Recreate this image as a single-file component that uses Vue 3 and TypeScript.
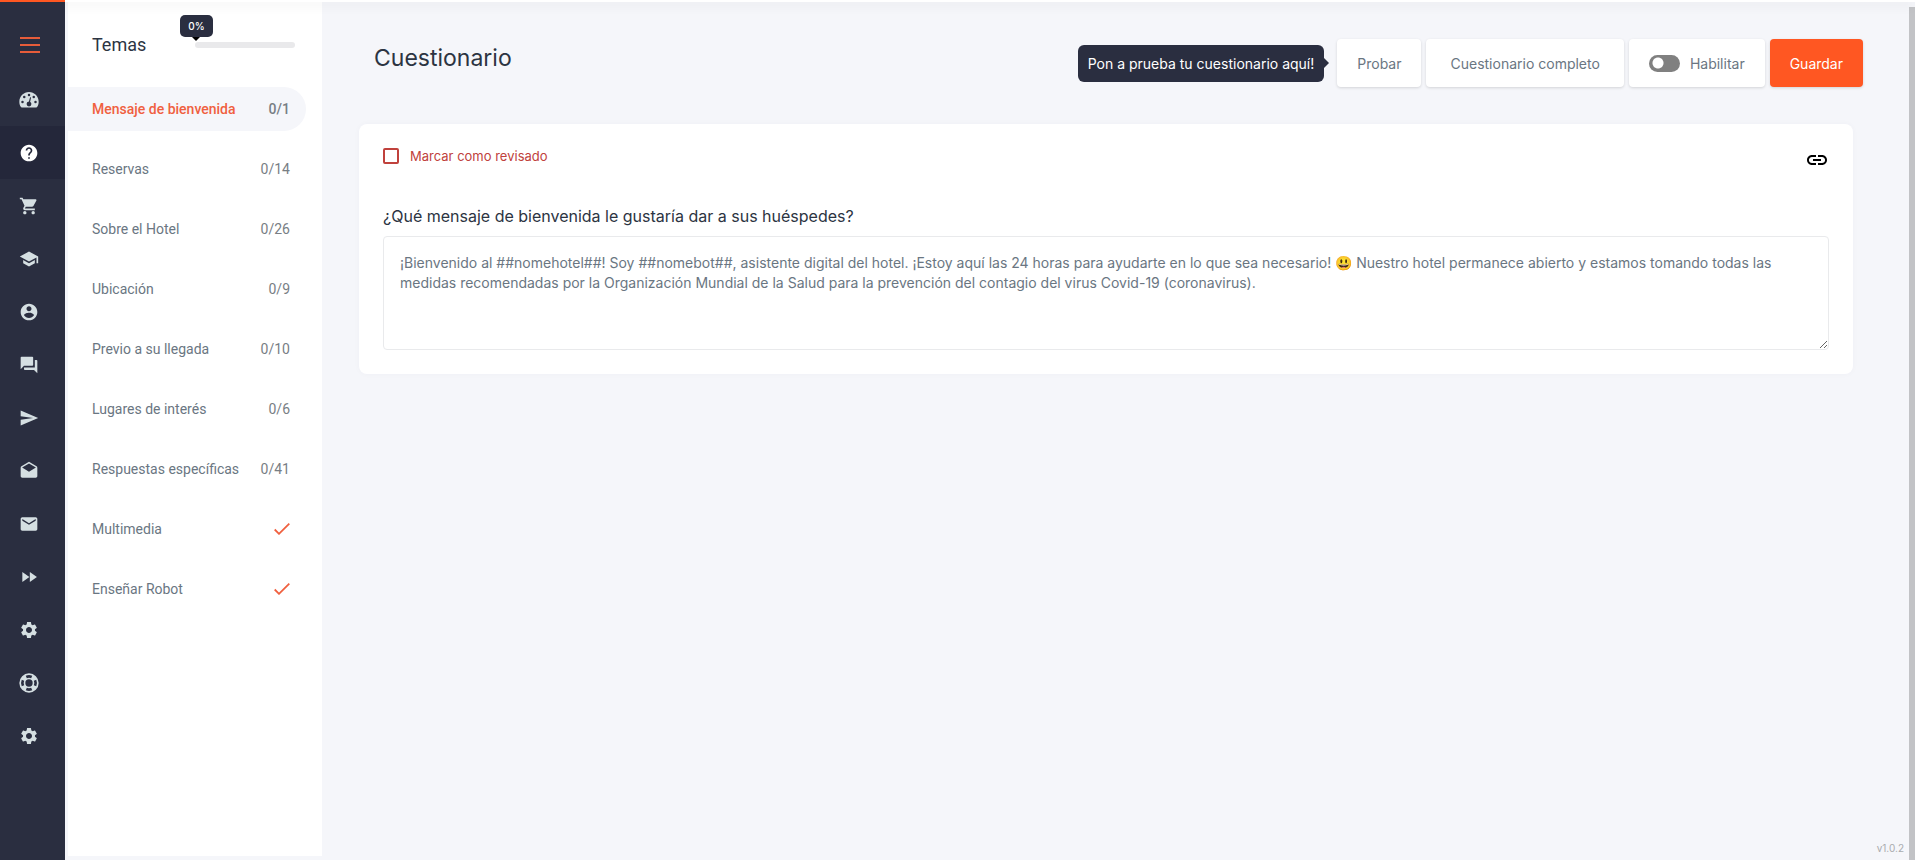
<script setup lang="ts">
import { ref } from 'vue'

interface NavItem {
  name: string
  paths: string
  active?: boolean
}

interface Topic {
  name: string
  count?: string
  active?: boolean
}

const gear =
  'M19.14 12.94c.04-.3.06-.61.06-.94 0-.32-.02-.64-.07-.94l2.03-1.58c.18-.14.23-.41.12-.61l-1.92-3.32c-.12-.22-.37-.29-.59-.22l-2.39.96c-.5-.38-1.03-.7-1.62-.94l-.36-2.54c-.04-.24-.24-.41-.48-.41h-3.84c-.24 0-.43.17-.47.41l-.36 2.54c-.59.24-1.13.57-1.62.94l-2.39-.96c-.22-.08-.47 0-.59.22L2.74 8.87c-.12.21-.08.47.12.61l2.03 1.58c-.05.3-.09.63-.09.94s.02.64.07.94l-2.03 1.58c-.18.14-.23.41-.12.61l1.92 3.32c.12.22.37.29.59.22l2.39-.96c.5.38 1.03.7 1.62.94l.36 2.54c.05.24.24.41.48.41h3.84c.24 0 .44-.17.47-.41l.36-2.54c.59-.24 1.13-.56 1.62-.94l2.39.96c.22.08.47 0 .59-.22l1.92-3.32c.12-.22.07-.47-.12-.61l-2.01-1.58zM12 15.6c-1.98 0-3.6-1.62-3.6-3.6s1.62-3.6 3.6-3.6 3.6 1.62 3.6 3.6-1.62 3.6-3.6 3.6z'

const nav: NavItem[] = [
  {
    name: 'Panel',
    paths:
      'M12 2.4C5.600 2.400.4 7.600.4 14c0 2.300.6 4.400 1.700 6.200.3.500.7.800 1.300.8h17.200c.6 0 1-.3 1.300-.8 1.100-1.800 1.700-3.900 1.700-6.200C23.600 7.600 18.400 2.400 12 2.400zM12 4.600a1.500 1.500 0 1 1 0 3 1.500 1.500 0 0 1 0-3zM6.300 7a1.500 1.500 0 1 1 0 3 1.500 1.500 0 0 1 0-3zM17.700 7a1.500 1.500 0 1 1 0 3 1.500 1.500 0 0 1 0-3zM4.200 12.800a1.500 1.500 0 1 1 0 3 1.500 1.500 0 0 1 0-3zM19.800 12.800a1.500 1.500 0 1 1 0 3 1.500 1.500 0 0 1 0-3zM13.300 8.700l1.200.3-1.200 5.300c1 .5 1.600 1.400 1.600 2.500a2.900 2.900 0 1 1-3-2.900z'
  },
  {
    name: 'Cuestionario',
    active: true,
    paths:
      'M12 2C6.480 2 2 6.480 2 12s4.480 10 10 10 10-4.480 10-10S17.520 2 12 2zm1 17h-2v-2h2v2zm2.070-7.750l-.9.920C13.450 12.900 13 13.500 13 15h-2v-.5c0-1.100.45-2.100 1.170-2.830l1.240-1.260c.37-.36.59-.86.59-1.410 0-1.100-.9-2-2-2s-2 .9-2 2H8c0-2.210 1.790-4 4-4s4 1.790 4 4c0 .88-.36 1.680-.93 2.250z'
  },
  {
    name: 'Tienda',
    paths:
      'M7 18c-1.100 0-1.990.9-1.990 2S5.900 22 7 22s2-.9 2-2-.9-2-2-2zM1 2v2h2l3.600 7.590-1.350 2.450c-.16.28-.25.61-.25.960 0 1.100.9 2 2 2h12v-2H7.420c-.14 0-.25-.11-.25-.25l.03-.12.900-1.630h7.450c.75 0 1.410-.41 1.750-1.030l3.580-6.490c.08-.14.12-.31.12-.48 0-.55-.45-1-1-1H5.210l-.94-2H1zm16 16c-1.100 0-1.990.9-1.990 2s.89 2 1.990 2 2-.9 2-2-.9-2-2-2z'
  },
  {
    name: 'Formación',
    paths: 'M5 13.180v4L12 21l7-3.820v-4L12 17l-7-3.820zM12 3L1 9l11 6 9-4.910V17h2V9L12 3z'
  },
  {
    name: 'Cuenta',
    paths:
      'M12 2C6.480 2 2 6.480 2 12s4.480 10 10 10 10-4.480 10-10S17.520 2 12 2zm0 3c1.660 0 3 1.340 3 3s-1.340 3-3 3-3-1.340-3-3 1.340-3 3-3zm0 14.200c-2.500 0-4.710-1.280-6-3.220.03-1.990 4-3.080 6-3.080 1.990 0 5.970 1.090 6 3.080-1.290 1.940-3.500 3.220-6 3.220z'
  },
  {
    name: 'Conversaciones',
    paths:
      'M21 6h-2v9H6v2c0 .55.45 1 1 1h11l4 4V7c0-.55-.45-1-1-1zm-4 6V3c0-.55-.45-1-1-1H3c-.55 0-1 .45-1 1v14l4-4h10c.55 0 1-.45 1-1z'
  },
  { name: 'Enviar', paths: 'M2.010 21L23 12 2.010 3 2 10l15 2-15 2z' },
  {
    name: 'Mensajes leídos',
    paths:
      'M21.990 8c0-.72-.37-1.350-.94-1.700L12 1 2.950 6.300C2.380 6.650 2 7.280 2 8v10c0 1.100.9 2 2 2h16c1.100 0 2-.9 2-2l-.01-10zM12 13L3.740 7.840 12 3l8.260 4.840L12 13z'
  },
  {
    name: 'Correo',
    paths:
      'M20 4H4c-1.100 0-1.990.9-1.990 2L2 18c0 1.100.9 2 2 2h16c1.100 0 2-.9 2-2V6c0-1.100-.9-2-2-2zm0 4l-8 5-8-5V6l8 5 8-5v2z'
  },
  { name: 'Avanzar', paths: 'M4 18l8.500-6L4 6v12zm9-12v12l8.500-6L13 6z' },
  { name: 'Ajustes', paths: gear },
  {
    name: 'Ayuda',
    paths:
      'M12 .4a11.600 11.600 0 1 0 0 23.200 11.600 11.600 0 0 0 0-23.200zM12 7.600a4.400 4.400 0 1 1 0 8.800 4.400 4.400 0 0 1 0-8.800zM8.100 3.300a9.500 9.500 0 0 1 7.800 0l-1.300 2.900a6.400 6.400 0 0 0-5.200 0zM20.700 8.100a9.500 9.500 0 0 1 0 7.800l-2.900-1.300a6.400 6.400 0 0 0 0-5.200zM15.900 20.700a9.500 9.500 0 0 1-7.800 0l1.300-2.900a6.400 6.400 0 0 0 5.200 0zM3.300 15.900a9.500 9.500 0 0 1 0-7.800l2.900 1.300a6.400 6.400 0 0 0 0 5.200z'
  },
  { name: 'Configuración', paths: gear }
]

const topics: Topic[] = [
  { name: 'Mensaje de bienvenida', count: '0/1', active: true },
  { name: 'Reservas', count: '0/14' },
  { name: 'Sobre el Hotel', count: '0/26' },
  { name: 'Ubicación', count: '0/9' },
  { name: 'Previo a su llegada', count: '0/10' },
  { name: 'Lugares de interés', count: '0/6' },
  { name: 'Respuestas específicas', count: '0/41' },
  { name: 'Multimedia' },
  { name: 'Enseñar Robot' }
]

const enabled = ref(false)
const reviewed = ref(false)
const message = ref(
  '¡Bienvenido al ##nomehotel##! Soy ##nomebot##, asistente digital del hotel. ¡Estoy aquí las 24 horas para ayudarte en lo que sea necesario! 😃 Nuestro hotel permanece abierto y estamos tomando todas las medidas recomendadas por la Organización Mundial de la Salud para la prevención del contagio del virus Covid-19 (coronavirus).'
)
</script>

<template>
  <div class="app">
    <div class="topbar"><span class="topbar-accent"></span></div>
    <div class="body">
      <nav class="rail" aria-label="Principal">
        <button class="burger" type="button" aria-label="Menú">
          <span></span><span></span><span></span>
        </button>
        <a
          v-for="item in nav"
          :key="item.name"
          href="#"
          class="rail-link"
          :class="{ active: item.active }"
          :aria-label="item.name"
        >
          <svg viewBox="0 0 24 24" width="20" height="20" aria-hidden="true">
            <path :d="item.paths" fill="currentColor" fill-rule="evenodd" />
          </svg>
        </a>
      </nav>

      <aside class="topics">
        <div class="topics-head">
          <h2>Temas</h2>
          <div class="progress" role="progressbar" aria-label="Progreso" aria-valuenow="0" aria-valuemin="0" aria-valuemax="100">
            <span class="bubble">0%</span>
          </div>
        </div>
        <ul>
          <li v-for="topic in topics" :key="topic.name">
            <a href="#" class="topic" :class="{ active: topic.active }">
              <span class="topic-name">{{ topic.name }}</span>
              <span v-if="topic.count" class="topic-count">{{ topic.count }}</span>
              <svg v-else viewBox="0 0 16 12" width="16" height="12" aria-hidden="true">
                <path d="M.7 6.500L5 10.800 15.300.7" fill="none" stroke="#f0603f" stroke-width="1.800" />
              </svg>
            </a>
          </li>
        </ul>
      </aside>

      <main class="main">
        <header class="page-head">
          <h1>Cuestionario</h1>
          <div class="actions">
            <span class="tip" role="tooltip">Pon a prueba tu cuestionario aquí!</span>
            <button type="button" class="btn">Probar</button>
            <button type="button" class="btn wide">Cuestionario completo</button>
            <label class="btn toggle">
              <input v-model="enabled" type="checkbox" role="switch" />
              <span>Habilitar</span>
            </label>
            <button type="button" class="btn primary">Guardar</button>
          </div>
        </header>

        <section class="card">
          <div class="card-top">
            <label class="review">
              <input v-model="reviewed" type="checkbox" />
              <span>Marcar como revisado</span>
            </label>
            <button type="button" class="link-btn" aria-label="Copiar enlace">
              <svg viewBox="0 0 24 24" width="24" height="24" aria-hidden="true">
                <path
                  fill="#000"
                  d="M3.900 12c0-1.710 1.390-3.100 3.100-3.100h4V7H7c-2.760 0-5 2.240-5 5s2.240 5 5 5h4v-1.900H7c-1.710 0-3.100-1.390-3.100-3.100zM8 13h8v-2H8v2zm9-6h-4v1.900h4c1.710 0 3.100 1.390 3.100 3.100s-1.390 3.100-3.100 3.100h-4V17h4c2.760 0 5-2.240 5-5s-2.240-5-5-5z"
                />
              </svg>
            </button>
          </div>
          <label class="question" for="welcome">¿Qué mensaje de bienvenida le gustaría dar a sus huéspedes?</label>
          <textarea id="welcome" v-model="message" spellcheck="false"></textarea>
        </section>

        <footer>v1.0.2</footer>
      </main>

      <div class="scrollbar"></div>
    </div>
  </div>
</template>

<style>
body {
  margin: 0;
  background: #f5f6fa;
}
</style>

<style scoped>
.app {
  display: flex;
  flex-direction: column;
  min-height: 100vh;
  background: #f5f6fa;
  color: #2c3442;
  font-family: Inter, 'Liberation Sans', sans-serif;
  font-size: 14px;
}

.topbar {
  height: 2px;
  background: #fff;
  box-shadow: 0 2px 12px rgba(0, 0, 0, 0.16);
  position: relative;
}

.topbar-accent {
  display: block;
  width: 65px;
  height: 2px;
  background: #ff5722;
}

.body {
  display: flex;
  flex: 1;
}

.rail {
  width: 65px;
  flex: none;
  background: #2a2e40;
  display: flex;
  flex-direction: column;
  position: relative;
}

.burger {
  display: flex;
  flex-direction: column;
  gap: 5px;
  width: 20px;
  margin: 35px 0 20px 20px;
  padding: 0;
  border: 0;
  background: none;
}

.burger span {
  height: 2px;
  background: #e65c3a;
}

.rail-link {
  display: flex;
  align-items: center;
  height: 53px;
  padding-left: 19px;
  color: #d5dfe2;
}

.rail-link.active {
  background: #24273a;
  color: #fff;
}

.topics {
  flex: none;
  width: 254px;
  margin: 0 0 4px 3px;
  background: #fff;
  font-family: Roboto, 'Liberation Sans', sans-serif;
}

.topics-head {
  display: flex;
  align-items: center;
  justify-content: space-between;
  padding: 31px 27px 30px 24px;
}

h2 {
  margin: 0;
  font-size: 18px;
  line-height: 24px;
  font-weight: 400;
}

.progress {
  position: relative;
  width: 100px;
  height: 6px;
  border-radius: 3px;
  background: #e9e9eb;
}

.bubble {
  position: absolute;
  left: -15px;
  bottom: 11px;
  width: 33px;
  line-height: 22px;
  border-radius: 5px;
  background: #2a2e40;
  color: #fff;
  font-family: Inter, sans-serif;
  font-size: 10px;
  font-weight: 500;
  text-align: center;
}

.bubble::after {
  content: '';
  position: absolute;
  top: 22px;
  left: 12px;
  border: 4px solid transparent;
  border-top-color: #000;
  border-bottom: 0;
}

ul {
  list-style: none;
  margin: 0;
  padding: 0;
  display: flex;
  flex-direction: column;
  gap: 16px;
}

.topic {
  display: flex;
  align-items: center;
  justify-content: space-between;
  height: 44px;
  margin-right: 16px;
  padding: 0 16px 0 24px;
  border-radius: 0 22px 22px 0;
  color: #6a7682;
  text-decoration: none;
}

.topic-count {
  color: #787e84;
}

.topic.active {
  background: #f5f6fa;
  font-weight: 500;
}

.topic.active .topic-name {
  color: #f0603f;
}

.main {
  flex: 1;
  min-width: 0;
  display: flex;
  flex-direction: column;
}

.page-head {
  display: flex;
  justify-content: space-between;
  padding: 37px 46px 37px 52px;
}

h1 {
  margin: 0;
  font-size: 23px;
  line-height: 38px;
  font-weight: 400;
}

.actions {
  display: flex;
  align-items: center;
  gap: 5px;
}

.tip {
  position: relative;
  margin-right: 8px;
  padding: 0 10px;
  line-height: 37px;
  border-radius: 6px;
  background: #2a2e40;
  color: #fff;
}

.tip::after {
  content: '';
  position: absolute;
  left: 100%;
  top: 13px;
  border: 5px solid transparent;
  border-left-color: #2a2e40;
  border-right: 0;
}

.btn {
  display: flex;
  align-items: center;
  box-sizing: border-box;
  height: 48px;
  padding: 0 20px;
  border: 0;
  border-radius: 4px;
  background: #fff;
  box-shadow: 0 1px 3px rgba(0, 0, 0, 0.14);
  color: #6a7682;
  font: inherit;
}

.btn.wide {
  padding: 0 24px;
}

.btn.primary {
  background: #ff5722;
  color: #fff;
}

.toggle {
  gap: 10px;
}

.toggle input {
  appearance: none;
  width: 31px;
  height: 17px;
  margin: 0;
  border-radius: 9px;
  background: radial-gradient(circle at 9px 8px, #fff 5px, #808080 6px);
}

.card {
  margin: 0 56px 0 37px;
  padding: 24px;
  border-radius: 8px;
  background: #fff;
  box-shadow: 0 0 6px rgba(40, 50, 90, 0.03);
}

.card-top {
  display: flex;
  align-items: flex-start;
  justify-content: space-between;
  height: 56px;
}

.review {
  display: flex;
  align-items: center;
  gap: 11px;
  line-height: 16px;
  color: #c0413c;
  font-size: 13px;
}

.review input {
  appearance: none;
  width: 16px;
  height: 16px;
  margin: 0;
  border: 2px solid #c0413c;
  border-radius: 2px;
}

.link-btn {
  display: flex;
  padding: 0;
  border: 0;
  background: none;
}

.question {
  display: block;
  margin-bottom: 8px;
  font-size: 16px;
  line-height: 24px;
}

textarea {
  display: block;
  box-sizing: border-box;
  width: 100%;
  height: 114px;
  padding: 16px;
  border: 1px solid #e9eaec;
  border-radius: 4px;
  background: #fff;
  color: #6a7682;
  font: inherit;
  line-height: 20px;
  outline: 0;
  resize: vertical;
}

footer {
  margin-top: auto;
  padding: 0 5px 4px;
  text-align: right;
  font-size: 10px;
  line-height: 16px;
  color: #a9abae;
}

.scrollbar {
  flex: none;
  width: 6px;
  margin-top: 5px;
  background: #c2c3c6;
}
</style>
